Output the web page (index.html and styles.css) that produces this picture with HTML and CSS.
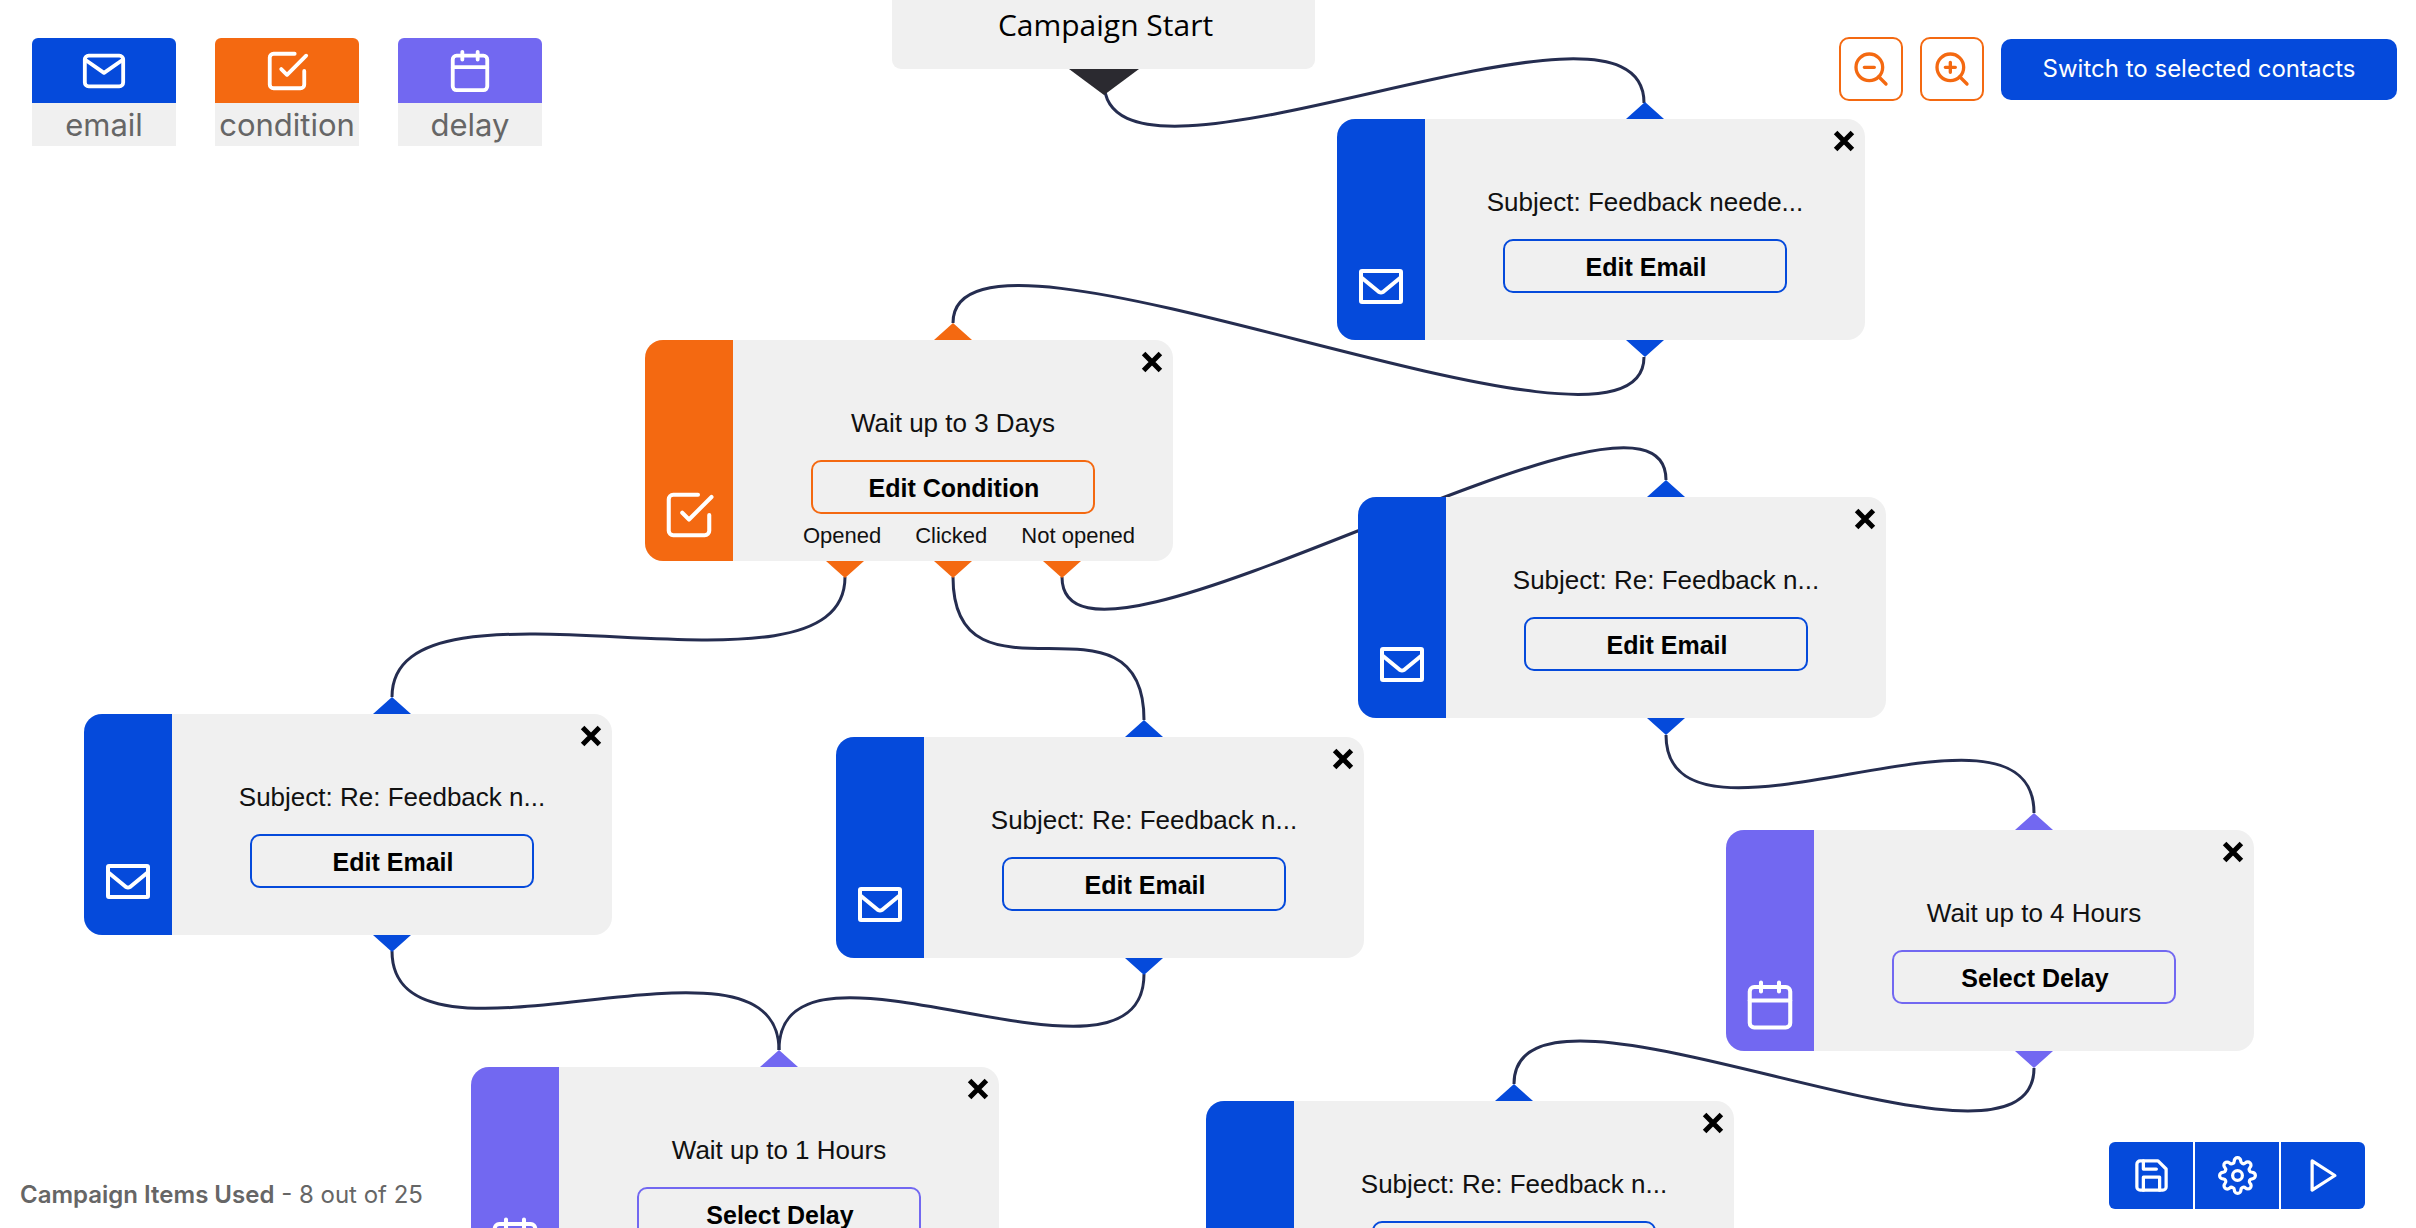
FILE: index.html
```html
<!DOCTYPE html>
<html lang="en">
<head>
<meta charset="utf-8">
<meta name="viewport" content="width=device-width, initial-scale=1">
<title>Campaign builder</title>
<link rel="stylesheet" href="styles.css">
</head>
<body>
<svg class="sprite" aria-hidden="true">
  <symbol id="mail" viewBox="0 0 24 24"><rect x="2" y="4" width="20" height="16" rx="2"/><path d="M22 6l-10 7L2 6"/></symbol>
  <symbol id="check" viewBox="0 0 24 24"><path d="M9 11l3 3L22 4"/><path d="M21 12v7a2 2 0 0 1-2 2H5a2 2 0 0 1-2-2V5a2 2 0 0 1 2-2h11"/></symbol>
  <symbol id="calendar" viewBox="0 0 24 24"><rect x="3" y="4" width="18" height="18" rx="2"/><path d="M16 2v4M8 2v4M3 10h18"/></symbol>
  <symbol id="envelope" viewBox="0 0 54 54"><rect x="7" y="4" width="40" height="31" rx="1"/><path d="M8 11l17 14q2 1 4 0l17-14"/></symbol>
  <symbol id="close" viewBox="0 0 22 22"><path d="M2.6 2.6l16.8 16.8M19.4 2.6l-16.8 16.8"/></symbol>
  <symbol id="zoom-out" viewBox="0 0 24 24"><circle cx="11" cy="11" r="8"/><path d="M21 21l-4.35-4.35M8 11h6"/></symbol>
  <symbol id="zoom-in" viewBox="0 0 24 24"><circle cx="11" cy="11" r="8"/><path d="M21 21l-4.35-4.35M11 8v6M8 11h6"/></symbol>
  <symbol id="save" viewBox="0 0 24 24"><path d="M19 21H5a2 2 0 0 1-2-2V5a2 2 0 0 1 2-2h11l5 5v11a2 2 0 0 1-2 2z"/><path d="M17 21v-8H7v8M7 3v5h8"/></symbol>
  <symbol id="settings" viewBox="0 0 24 24"><circle cx="12" cy="12" r="3"/><path d="M19.4 15a1.65 1.65 0 0 0 .33 1.82l.06.06a2 2 0 0 1 0 2.83 2 2 0 0 1-2.83 0l-.06-.06a1.65 1.65 0 0 0-1.82-.33 1.65 1.65 0 0 0-1 1.51V21a2 2 0 0 1-2 2 2 2 0 0 1-2-2v-.09A1.65 1.65 0 0 0 9 19.4a1.65 1.65 0 0 0-1.82.33l-.06.06a2 2 0 0 1-2.83 0 2 2 0 0 1 0-2.83l.06-.06a1.65 1.65 0 0 0 .33-1.82 1.65 1.65 0 0 0-1.51-1H3a2 2 0 0 1-2-2 2 2 0 0 1 2-2h.09A1.65 1.65 0 0 0 4.6 9a1.65 1.65 0 0 0-.33-1.82l-.06-.06a2 2 0 0 1 0-2.83 2 2 0 0 1 2.83 0l.06.06a1.65 1.65 0 0 0 1.82.33H9a1.65 1.65 0 0 0 1-1.51V3a2 2 0 0 1 2-2 2 2 0 0 1 2 2v.09a1.65 1.65 0 0 0 1 1.51 1.65 1.65 0 0 0 1.82-.33l.06-.06a2 2 0 0 1 2.83 0 2 2 0 0 1 0 2.83l-.06.06a1.65 1.65 0 0 0-.33 1.82V9a1.65 1.65 0 0 0 1.51 1H21a2 2 0 0 1 2 2 2 2 0 0 1-2 2h-.09a1.65 1.65 0 0 0-1.51 1z"/></symbol>
  <symbol id="play" viewBox="0 0 24 24"><path d="M5 3l14 9-14 9z"/></symbol>
</svg>

<div class="app">
  <main class="canvas">
    <svg class="edges" aria-hidden="true">
      <path d="M1104 82C1104 226 1644 -41 1644 103"/>
      <path d="M1644 357C1644 499 953 181 953 323"/>
      <path d="M1062 577C1062 719 1666 338 1666 480"/>
      <path d="M845 577C845 719 392 555 392 697"/>
      <path d="M953 577C953 719 1144 578 1144 720"/>
      <path d="M1666 735C1666 877 2034 671 2034 813"/>
      <path d="M2034 1068C2034 1210 1514 942 1514 1084"/>
      <path d="M392 951C392 1093 779 908 779 1050"/>
      <path d="M1144 974C1144 1116 779 908 779 1050"/>
    </svg>

    <div class="start">Campaign Start<i class="start-port"></i></div>

    <article class="node email" style="left:1337px;top:119px">
      <i class="port in"></i>
      <div class="side"><svg><use href="#envelope"/></svg></div>
      <div class="body"><p class="text">Subject: Feedback neede...</p><button class="edit">Edit Email</button></div>
      <button class="close" aria-label="Remove"><svg><use href="#close"/></svg></button>
      <i class="port out"></i>
    </article>

    <article class="node condition" style="left:645px;top:340px">
      <i class="port in"></i>
      <div class="side"><svg><use href="#check"/></svg></div>
      <div class="body"><p class="text">Wait up to 3 Days</p><button class="edit">Edit Condition</button>
        <div class="outcomes"><span>Opened</span><span>Clicked</span><span>Not opened</span></div></div>
      <button class="close" aria-label="Remove"><svg><use href="#close"/></svg></button>
      <i class="port out first"></i><i class="port out"></i><i class="port out last"></i>
    </article>

    <article class="node email" style="left:1358px;top:497px">
      <i class="port in"></i>
      <div class="side"><svg><use href="#envelope"/></svg></div>
      <div class="body"><p class="text">Subject: Re: Feedback n...</p><button class="edit">Edit Email</button></div>
      <button class="close" aria-label="Remove"><svg><use href="#close"/></svg></button>
      <i class="port out"></i>
    </article>

    <article class="node email" style="left:84px;top:714px">
      <i class="port in"></i>
      <div class="side"><svg><use href="#envelope"/></svg></div>
      <div class="body"><p class="text">Subject: Re: Feedback n...</p><button class="edit">Edit Email</button></div>
      <button class="close" aria-label="Remove"><svg><use href="#close"/></svg></button>
      <i class="port out"></i>
    </article>

    <article class="node email" style="left:836px;top:737px">
      <i class="port in"></i>
      <div class="side"><svg><use href="#envelope"/></svg></div>
      <div class="body"><p class="text">Subject: Re: Feedback n...</p><button class="edit">Edit Email</button></div>
      <button class="close" aria-label="Remove"><svg><use href="#close"/></svg></button>
      <i class="port out"></i>
    </article>

    <article class="node delay" style="left:1726px;top:830px">
      <i class="port in"></i>
      <div class="side"><svg><use href="#calendar"/></svg></div>
      <div class="body"><p class="text">Wait up to 4 Hours</p><button class="edit">Select Delay</button></div>
      <button class="close" aria-label="Remove"><svg><use href="#close"/></svg></button>
      <i class="port out"></i>
    </article>

    <article class="node delay" style="left:471px;top:1067px">
      <i class="port in"></i>
      <div class="side"><svg><use href="#calendar"/></svg></div>
      <div class="body"><p class="text">Wait up to 1 Hours</p><button class="edit">Select Delay</button></div>
      <button class="close" aria-label="Remove"><svg><use href="#close"/></svg></button>
    </article>

    <article class="node email" style="left:1206px;top:1101px">
      <i class="port in"></i>
      <div class="side"></div>
      <div class="body"><p class="text">Subject: Re: Feedback n...</p><button class="edit" aria-label="Edit Email"></button></div>
      <button class="close" aria-label="Remove"><svg><use href="#close"/></svg></button>
    </article>
  </main>

  <header class="topbar">
    <div class="palette">
      <button class="tile email"><span class="tile-icon"><svg><use href="#mail"/></svg></span><span class="tile-name">email</span></button>
      <button class="tile condition"><span class="tile-icon"><svg><use href="#check"/></svg></span><span class="tile-name">condition</span></button>
      <button class="tile delay"><span class="tile-icon"><svg><use href="#calendar"/></svg></span><span class="tile-name">delay</span></button>
    </div>
    <div class="tools">
      <button class="zoom" aria-label="Zoom out"><svg><use href="#zoom-out"/></svg></button>
      <button class="zoom" aria-label="Zoom in"><svg><use href="#zoom-in"/></svg></button>
      <button class="switch">Switch to selected contacts</button>
    </div>
  </header>

  <footer class="bottombar">
    <p class="usage"><strong>Campaign Items Used</strong> - 8 out of 25</p>
    <div class="actions">
      <button aria-label="Save"><svg><use href="#save"/></svg></button>
      <button aria-label="Settings"><svg><use href="#settings"/></svg></button>
      <button aria-label="Run"><svg><use href="#play"/></svg></button>
    </div>
  </footer>
</div>
</body>
</html>
```
FILE: styles.css
```css
:root {
  --blue: #054adb;
  --orange: #f46911;
  --violet: #7268f1;
  --panel: #f0f0f0;
  --ui: Inter, "Open Sans", sans-serif;
}

* { box-sizing: border-box; }

body {
  margin: 0;
  background: #fff;
  font-family: "Liberation Sans", Arial, sans-serif;
  color: #000;
}

p { margin: 0; }

button {
  margin: 0;
  padding: 0;
  border: 0;
  background: none;
  color: inherit;
  font: inherit;
  cursor: pointer;
}

svg {
  display: block;
  fill: none;
  stroke: currentColor;
  stroke-width: 2;
  stroke-linecap: round;
  stroke-linejoin: round;
}

.sprite { position: absolute; width: 0; height: 0; }

.email { --accent: var(--blue); }
.condition { --accent: var(--orange); }
.delay { --accent: var(--violet); }

.app {
  position: relative;
  display: flex;
  flex-direction: column;
  justify-content: space-between;
  min-height: 100vh;
  overflow: hidden;
}

/* Canvas */
.canvas { position: absolute; inset: 0; }

.edges {
  position: absolute;
  inset: 0;
  width: 100%;
  height: 100%;
  overflow: visible;
  stroke: #252d50;
  stroke-width: 3;
  stroke-linecap: butt;
}

.start {
  position: absolute;
  left: 892px;
  top: -20px;
  width: 423px;
  height: 89px;
  padding-top: 25px;
  padding-left: 4px;
  border-radius: 9px;
  background: var(--panel);
  font: 30px/40px "Open Sans", sans-serif;
  text-align: center;
}

.start-port {
  position: absolute;
  left: 177px;
  top: 100%;
  width: 70px;
  height: 26px;
  background: #2b2a30;
  clip-path: polygon(0 0, 100% 0, 50% 100%);
}

.node {
  position: absolute;
  display: flex;
  width: 528px;
  height: 221px;
  border-radius: 18px;
  background: var(--panel);
}

.side {
  display: flex;
  align-items: flex-end;
  justify-content: center;
  width: 88px;
  padding-bottom: 19px;
  border-radius: 18px 0 0 18px;
  background: var(--accent);
  color: #fff;
}

.side svg { width: 54px; height: 54px; stroke-width: 1.8; }
.email .side svg { stroke-width: 4; }

.body {
  flex: 1;
  display: flex;
  flex-direction: column;
  align-items: center;
  padding-top: 68px;
}

.text { font-size: 26px; line-height: 30px; color: #111; }

.edit {
  width: 284px;
  height: 54px;
  margin-top: 22px;
  padding-top: 2px;
  padding-left: 2px;
  border: 2px solid var(--accent);
  border-radius: 10px;
  font-size: 25px;
  font-weight: 700;
}

.outcomes {
  display: flex;
  gap: 34px;
  margin-top: 9px;
  padding-left: 32px;
  font-size: 22px;
  line-height: 26px;
  white-space: nowrap;
  color: #111;
}

.close { position: absolute; top: 11px; right: 10px; }
.close svg { width: 22px; height: 22px; stroke-width: 5; stroke-linecap: butt; }

.port {
  position: absolute;
  left: 289px;
  width: 38px;
  height: 17px;
  background: var(--accent);
}

.in { bottom: 100%; clip-path: polygon(50% 0, 100% 100%, 0 100%); }
.out { top: 100%; clip-path: polygon(0 0, 100% 0, 50% 100%); }
.first { left: 181px; }
.last { left: 398px; }

/* Top bar */
.topbar, .bottombar {
  position: relative;
  display: flex;
  justify-content: space-between;
  pointer-events: none;
}

.topbar button, .bottombar button { pointer-events: auto; }

.topbar { align-items: flex-start; padding: 37px 19px 0 32px; }

.palette { display: flex; gap: 39px; margin-top: 1px; }

.tile {
  display: flex;
  flex-direction: column;
  width: 144px;
  border-radius: 6px 6px 0 0;
  overflow: hidden;
}

.tile-icon {
  display: flex;
  align-items: center;
  justify-content: center;
  width: 100%;
  height: 65px;
  background: var(--accent);
  color: #fff;
}

.tile-icon svg { width: 46px; height: 46px; }

.tile-name {
  width: 100%;
  background: var(--panel);
  color: #666;
  font: 400 31px/43px var(--ui);
}

.tools { display: flex; align-items: center; gap: 17px; }

.zoom {
  display: flex;
  align-items: center;
  justify-content: center;
  width: 64px;
  height: 64px;
  border: 2px solid var(--orange);
  border-radius: 10px;
  background: #fff;
  color: var(--orange);
}

.zoom svg { width: 40px; height: 40px; }

.switch {
  width: 396px;
  height: 61px;
  border-radius: 10px;
  background: var(--blue);
  color: #fff;
  font: 400 24px/30px var(--ui);
}

/* Bottom bar */
.bottombar { align-items: flex-end; padding: 0 51px 19px 20px; }

.usage {
  color: #666;
  font: 400 24px/28px var(--ui);
}

.usage strong { font-weight: 600; }

.actions {
  display: flex;
  gap: 2px;
  border-radius: 6px;
  overflow: hidden;
}

.actions button {
  display: flex;
  align-items: center;
  justify-content: center;
  width: 84px;
  height: 67px;
  background: var(--blue);
  color: #fff;
}

.actions svg { width: 39px; height: 39px; }
```
